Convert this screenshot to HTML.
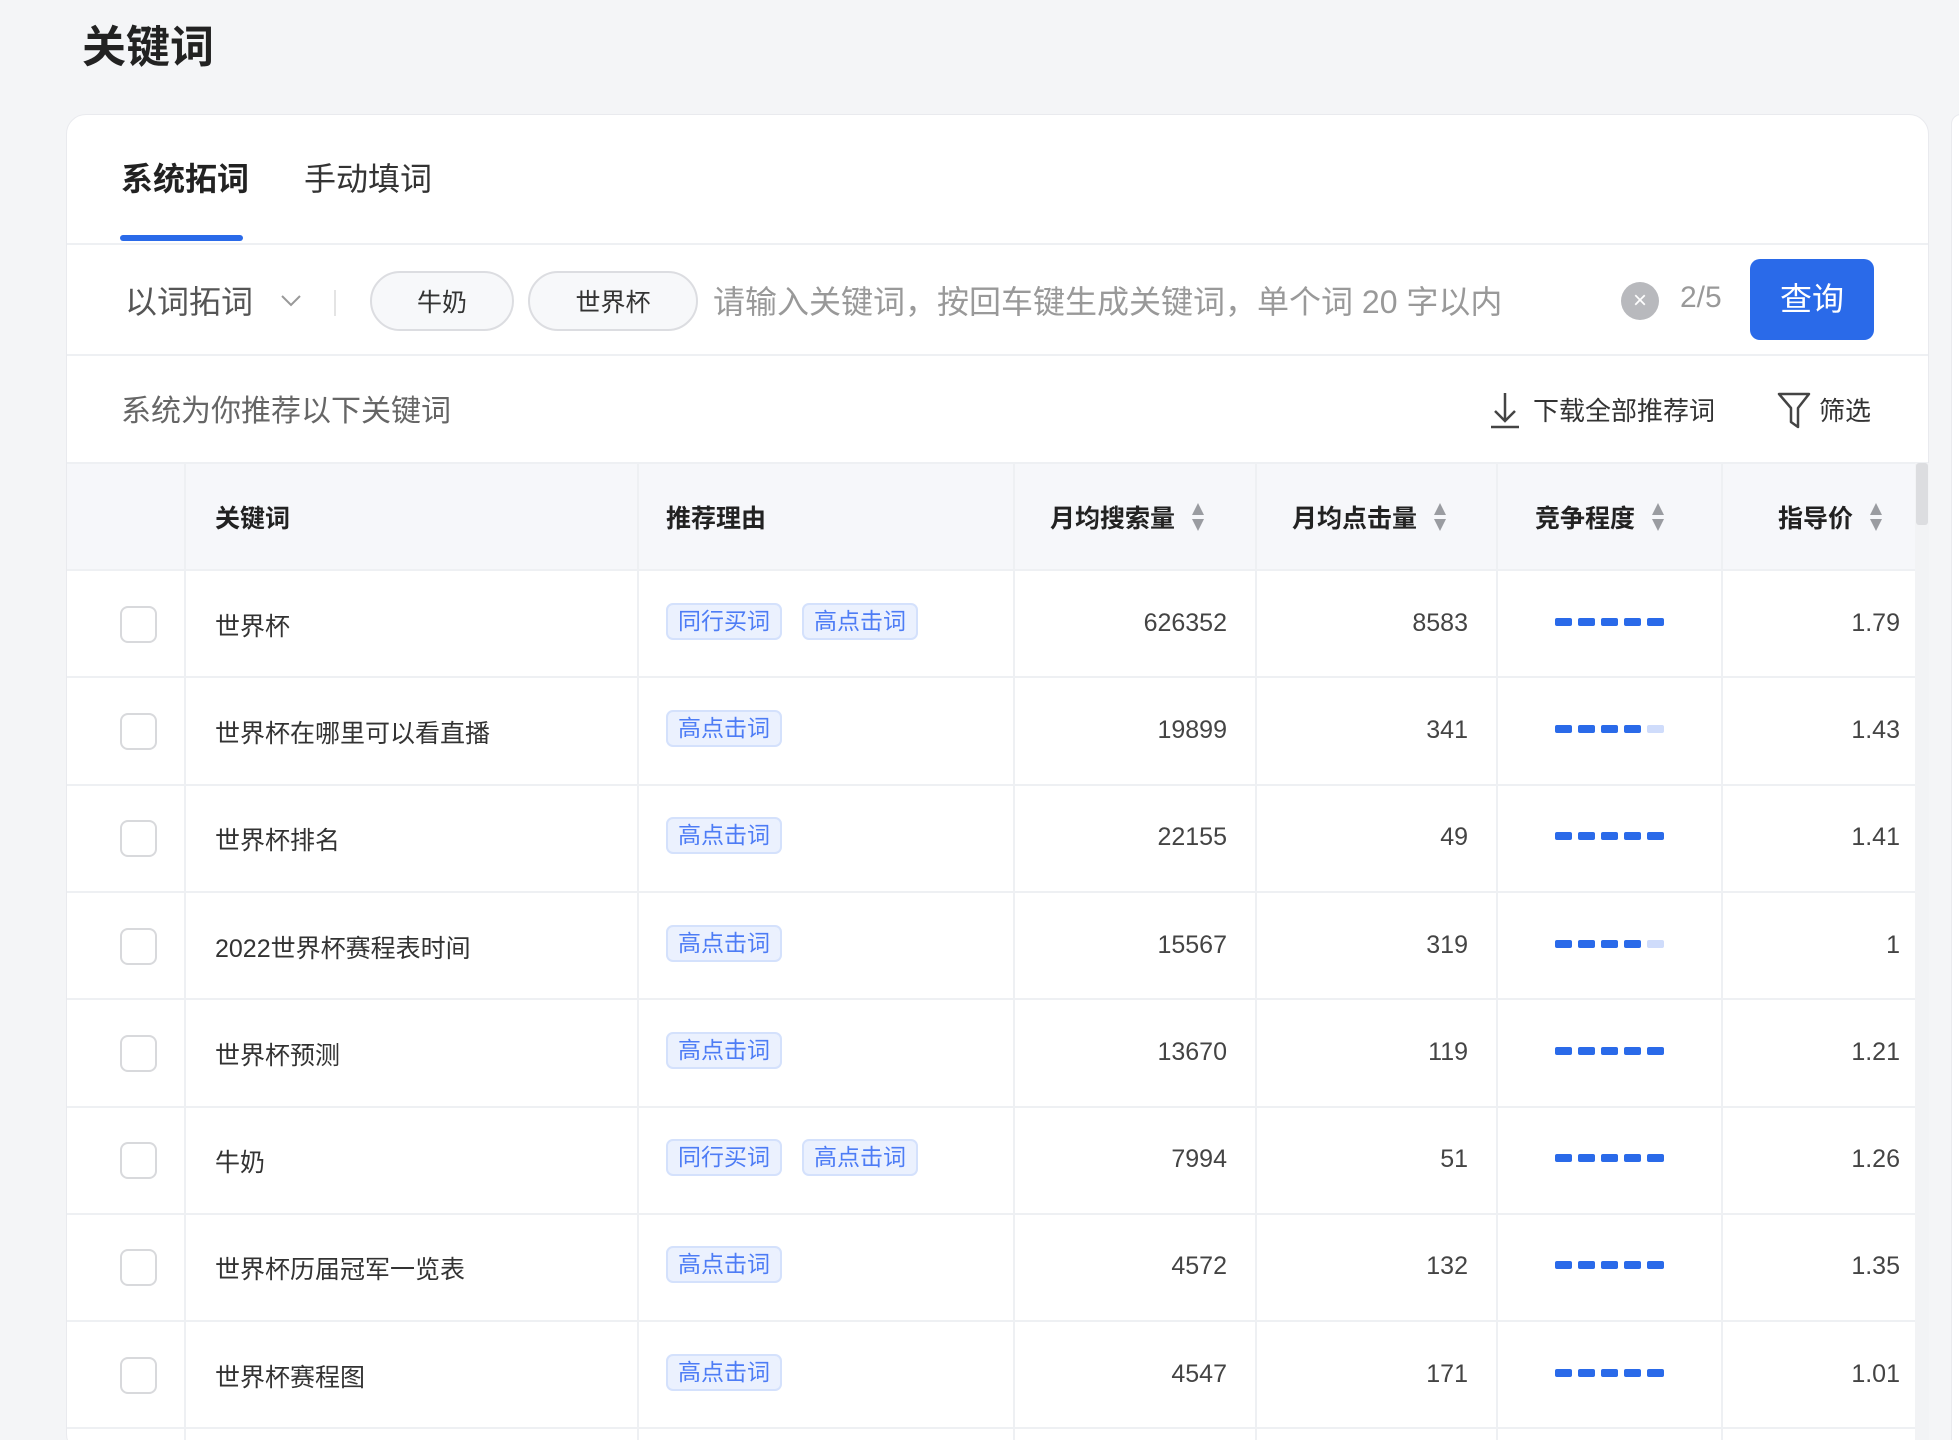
<!DOCTYPE html>
<html style="width:1959px;height:1440px;overflow:hidden"><head><meta charset="utf-8"><style>
*{margin:0;padding:0;box-sizing:border-box}
body{width:1959px;height:1440px;overflow:hidden;background:#f4f5f7;font-family:"Liberation Sans","Noto Sans CJK SC",sans-serif;color:#333;position:relative}
.a{position:absolute;white-space:nowrap}
.card{position:absolute;left:66px;top:114px;width:1863px;height:1340px;background:#fff;border:1px solid #e9eaee;border-radius:20px;overflow:hidden}
.side{position:absolute;left:1951px;top:114px;width:20px;height:1340px;background:#fff;border:1px solid #e9eaee;border-radius:20px}
.hl{position:absolute;height:2px;background:#eef0f3}
.vl{position:absolute;width:2px;background:#eef0f3}
.pill{position:absolute;top:271px;height:60px;border:2px solid #dcdde1;border-radius:30px;background:#f7f8fa;font-size:25px;color:#333;display:flex;align-items:center;justify-content:center}
.th{position:absolute;top:466px;height:107px;line-height:107px;font-size:25px;font-weight:bold;color:#222}
.sort{display:inline-block;vertical-align:middle;margin-left:16px;width:14px;height:30px;position:relative;top:-3px}
.cb{position:absolute;left:120px;width:37px;height:37px;border:2px solid #d8d9dc;border-radius:8px;background:#fff}
.kw{position:absolute;left:215px;font-size:25px;color:#333}
.tag{position:absolute;height:37px;line-height:33px;padding:0 10px;font-size:23px;color:#4d7cf5;background:#ebf1fe;border:2px solid #d4e1fc;border-radius:7px}
.num{position:absolute;font-size:25px;color:#444;text-align:right}
.bar{position:absolute;height:8px;width:17px;background:#2a6ae9;border-radius:2px}
</style></head><body>
<div class="a" style="left:82px;top:11px;font-size:44px;font-weight:bold;color:#222">关键词</div>
<div class="side"></div>
<div class="card"></div>
<div class="a" style="left:121px;top:154px;font-size:32px;font-weight:bold;color:#222">系统拓词</div>
<div class="a" style="left:304px;top:154px;font-size:32px;color:#333">手动填词</div>
<div class="a" style="left:120px;top:235px;width:123px;height:6px;background:#2a6ae9;border-radius:3px"></div>
<div class="hl" style="left:67px;top:243px;width:1861px"></div>
<div class="a" style="left:125px;top:277px;font-size:32px;color:#555">以词拓词</div>
<svg class="a" style="left:280px;top:294px" width="22" height="14"><path d="M2 2 L11 11 L20 2" stroke="#999" stroke-width="2" fill="none"/></svg>
<div class="a" style="left:334px;top:290px;width:2px;height:26px;background:#e4e4e4"></div>
<div class="pill" style="left:370px;width:144px">牛奶</div>
<div class="pill" style="left:528px;width:170px">世界杯</div>
<div class="a" style="left:713px;top:277px;font-size:32px;color:#999">请输入关键词，按回车键生成关键词，单个词 20 字以内</div>
<div class="a" style="left:1621px;top:282px;width:38px;height:38px;border-radius:50%;background:#b8b9bd;color:#fff;font-size:24px;line-height:38px;text-align:center">×</div>
<div class="a" style="left:1680px;top:281px;font-size:30px;color:#999">2/5</div>
<div class="a" style="left:1750px;top:259px;width:124px;height:81px;background:#2a6ae9;border-radius:10px;color:#fff;font-size:32px;line-height:81px;text-align:center">查询</div>
<div class="hl" style="left:67px;top:354px;width:1861px"></div>
<div class="a" style="left:121px;top:386px;font-size:30px;color:#666">系统为你推荐以下关键词</div>
<svg class="a" style="left:1488px;top:390px" width="34" height="40"><path d="M17 3 V31 M7 21 L17 31 L27 21 M3 37 H31" stroke="#444" stroke-width="2.5" fill="none"/></svg>
<div class="a" style="left:1533px;top:391px;font-size:26px;color:#333">下载全部推荐词</div>
<svg class="a" style="left:1776px;top:390px" width="36" height="40"><path d="M3 4 H33 L22 18 V37 L15 32 V18 Z" stroke="#444" stroke-width="2.5" fill="none" stroke-linejoin="round"/></svg>
<div class="a" style="left:1819px;top:391px;font-size:26px;color:#333">筛选</div>
<div class="a" style="left:67px;top:463px;width:1848px;height:107px;background:#f6f7fa"></div>
<div class="hl" style="left:67px;top:462px;width:1861px"></div>
<div class="hl" style="left:67px;top:569px;width:1848px"></div>
<div class="a" style="left:1915px;top:463px;width:14px;height:980px;background:#f2f3f5"></div>
<div class="a" style="left:1916px;top:463px;width:12px;height:62px;background:#dcdde0;border-radius:3px"></div>
<div class="vl" style="left:184px;top:463px;height:980px"></div>
<div class="vl" style="left:637px;top:463px;height:980px"></div>
<div class="vl" style="left:1013px;top:463px;height:980px"></div>
<div class="vl" style="left:1255px;top:463px;height:980px"></div>
<div class="vl" style="left:1496px;top:463px;height:980px"></div>
<div class="vl" style="left:1721px;top:463px;height:980px"></div>
<div class="th" style="left:215px">关键词</div>
<div class="th" style="left:666px">推荐理由</div>
<div class="th" style="left:1050px">月均搜索量<svg class="sort" viewBox="0 0 14 30"><path d="M7 1 L13 13 H1Z M7 29 L13 17 H1Z" fill="#9a9ca1"/></svg></div>
<div class="th" style="left:1292px">月均点击量<svg class="sort" viewBox="0 0 14 30"><path d="M7 1 L13 13 H1Z M7 29 L13 17 H1Z" fill="#9a9ca1"/></svg></div>
<div class="th" style="left:1535px">竞争程度<svg class="sort" viewBox="0 0 14 30"><path d="M7 1 L13 13 H1Z M7 29 L13 17 H1Z" fill="#9a9ca1"/></svg></div>
<div class="th" style="left:1778px">指导价<svg class="sort" viewBox="0 0 14 30"><path d="M7 1 L13 13 H1Z M7 29 L13 17 H1Z" fill="#9a9ca1"/></svg></div>

<div id="rows"></div>
<script>
var d=[["世界杯",2,"626352","8583",5,"1.79"],["世界杯在哪里可以看直播",1,"19899","341",4,"1.43"],["世界杯排名",1,"22155","49",5,"1.41"],["2022世界杯赛程表时间",1,"15567","319",4,"1"],["世界杯预测",1,"13670","119",5,"1.21"],["牛奶",2,"7994","51",5,"1.26"],["世界杯历届冠军一览表",1,"4572","132",5,"1.35"],["世界杯赛程图",1,"4547","171",5,"1.01"]];
var h="";
d.forEach(function(r,i){var t=570+i*107.3,c=t+53.6;
h+='<div class="cb" style="top:'+(c-18)+'px"></div>';
h+='<div class="kw a" style="top:'+(c-17)+'px">'+r[0]+'</div>';
if(r[1]==2){h+='<div class="tag a" style="left:666px;top:'+(c-21)+'px">同行买词</div><div class="tag a" style="left:802px;top:'+(c-21)+'px">高点击词</div>';}
else h+='<div class="tag a" style="left:666px;top:'+(c-21)+'px">高点击词</div>';
h+='<div class="num a" style="left:1020px;width:207px;top:'+(c-15)+'px">'+r[2]+'</div>';
h+='<div class="num a" style="left:1262px;width:206px;top:'+(c-15)+'px">'+r[3]+'</div>';
for(var k=0;k<5;k++)h+='<div class="bar" style="left:'+(1555+k*23)+'px;top:'+(c-6)+'px;'+(k>=r[4]?'background:#cfdcfb':'')+'"></div>';
h+='<div class="num a" style="left:1730px;width:170px;top:'+(c-15)+'px">'+r[5]+'</div>';
h+='<div class="hl" style="left:67px;top:'+(t+106.3)+'px;width:1848px"></div>';
});
document.getElementById("rows").innerHTML=h;
</script>
</body></html>
